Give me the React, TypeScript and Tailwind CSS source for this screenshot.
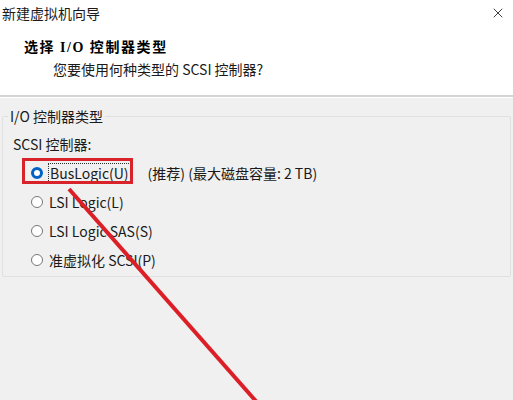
import { X } from "lucide-react";

const font = { fontFamily: '"Noto Sans CJK SC", "Noto Sans", sans-serif' };

const options = [
  { label: "BusLogic(U)", note: "(推荐) (最大磁盘容量: 2 TB)", checked: true },
  { label: "LSI Logic(L)" },
  { label: "LSI Logic SAS(S)" },
  { label: "准虚拟化 SCSI(P)" },
];

export default function App() {
  return (
    <div className="relative h-[400px] w-[513px] overflow-hidden bg-[#f0f0f0] text-[14px] text-[#1a1a1a]" style={font}>
      <header className="h-[95px] bg-white">
        <div className="flex h-[25px] items-center justify-between pl-[2px] pr-[7px]">
          <span className="leading-none">新建虚拟机向导</span>
          <X size={16} strokeWidth={1.3} className="text-[#222]" />
        </div>
        <div className="pl-[24px] pt-[11px]">
          <h1 className="text-[14px] font-bold leading-[20px] tracking-[1.6px] text-black">
            选择 <span className="font-['Liberation_Serif']">I/O</span> 控制器类型
          </h1>
          <p className="pl-[29px] leading-[22px]">您要使用何种类型的 SCSI 控制器?</p>
        </div>
      </header>
      <div className="h-[2px] bg-[#d4d4d4]" />
      <div className="h-px bg-white" />

      <fieldset className="mx-[2px] mt-[9px] h-[170px] rounded-[2px] border border-[#e0e0e0] px-[9px]">
        <legend className="-ml-[4px] px-[2px] leading-[18px]">I/O 控制器类型</legend>
        <p className="mt-[9px] pl-[1px] leading-[20px]">SCSI 控制器:</p>
        <ul className="mt-[9px] flex flex-col gap-[9px] pl-[19px]">
          {options.map((o) => (
            <li key={o.label} className="relative flex h-[20px] items-center">
              {o.checked ? (
                <span className="h-[12px] w-[12px] shrink-0 rounded-full border-[3.5px] border-[#0063c4] bg-white" />
              ) : (
                <span className="h-[12px] w-[12px] shrink-0 rounded-full border border-[#777] bg-white" />
              )}
              <span
                className={
                  o.checked
                    ? "ml-[5px] border border-dotted border-[#333] px-px leading-[18px]"
                    : "ml-[6px] leading-[20px]"
                }
              >
                {o.label}
              </span>
              {o.note && <span className="ml-[17px] leading-[20px]">{o.note}</span>}
              {o.checked && (
                <span className="pointer-events-none absolute -left-[9px] -top-[5px] h-[26px] w-[111px] border-[3px] border-[#d8232a]" />
              )}
            </li>
          ))}
        </ul>
      </fieldset>

      <svg className="pointer-events-none absolute left-0 top-0" width="513" height="400">
        <line x1="69" y1="189" x2="262" y2="408" stroke="#dc1f26" strokeWidth="4" />
      </svg>
    </div>
  );
}
